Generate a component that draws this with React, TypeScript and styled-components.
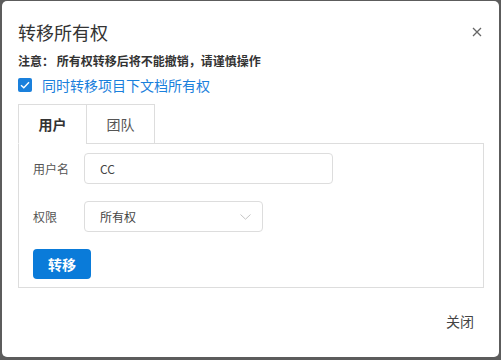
import React, { useState } from 'react';
import styled, { createGlobalStyle } from 'styled-components';

const GlobalStyle = createGlobalStyle`
  html, body {
    margin: 0;
    padding: 0;
    background: #5c5c5c;
    font-family: "Noto Sans CJK SC", "Noto Sans", sans-serif;
  }
  * { box-sizing: border-box; }
`;

const Dialog = styled.div`
  margin: 1px 2px 0 2px;
  width: 497px;
  height: 356px;
  background: #fff;
  border-radius: 5px;
  padding: 0 15px 0 16px;
  display: flex;
  flex-direction: column;
`;

const Header = styled.div`
  height: 48px;
  display: flex;
  align-items: center;
  justify-content: space-between;
  padding-top: 14px;
`;

const Title = styled.h1`
  margin: 0;
  font-size: 18px;
  font-weight: 400;
  color: #333;
  line-height: 18px;
`;

const Close = styled.button`
  border: 0;
  background: none;
  padding: 0;
  margin-right: 2px;
  display: flex;
  cursor: pointer;
`;

const Note = styled.div`
  margin-top: 4px;
  font-size: 12px;
  font-weight: 700;
  color: #333;
  line-height: 16px;
`;

const CheckRow = styled.label`
  margin-top: 9px;
  display: flex;
  align-items: center;
  gap: 10px;
  font-size: 14px;
  color: #1a80dc;
  line-height: 14px;
  cursor: pointer;
`;

const Box = styled.span`
  width: 14px;
  height: 14px;
  border-radius: 2px;
  background: #1a80dc;
  display: flex;
  align-items: center;
  justify-content: center;
`;

const Tabs = styled.div`
  margin-top: 12px;
  display: flex;
`;

const Tab = styled.button<{ $active?: boolean }>`
  width: 69px;
  height: 40px;
  margin-right: -1px;
  border: 1px solid #ddd;
  border-bottom-color: ${(p) => (p.$active ? 'transparent' : '#ddd')};
  background: #fff;
  font-family: inherit;
  font-size: 14px;
  font-weight: ${(p) => (p.$active ? 700 : 400)};
  color: ${(p) => (p.$active ? '#333' : '#555')};
  padding: 0;
  cursor: pointer;
`;

const Panel = styled.div`
  border: 1px solid #ddd;
  border-top: 0;
  padding: 9px 15px 8px 14px;
  display: flex;
  flex-direction: column;
  gap: 17px;
`;

const Row = styled.div`
  display: flex;
  align-items: center;
`;

const Label = styled.span`
  width: 51px;
  font-size: 12px;
  color: #555;
`;

const Input = styled.input<{ $w: number }>`
  width: ${(p) => p.$w}px;
  height: 31px;
  border: 1px solid #ddd;
  border-radius: 4px;
  padding: 0 15px;
  font-family: inherit;
  font-size: 12px;
  color: #444;
  outline: none;
`;

const Select = styled.div`
  width: 179px;
  height: 31px;
  border: 1px solid #ddd;
  border-radius: 4px;
  padding: 0 11px 0 15px;
  display: flex;
  align-items: center;
  justify-content: space-between;
  font-size: 12px;
  color: #444;
`;

const Primary = styled.button`
  width: 58px;
  height: 30px;
  border: 0;
  border-radius: 4px;
  background: #0a7bd9;
  color: #fff;
  font-family: inherit;
  font-size: 14px;
  font-weight: 700;
  cursor: pointer;
`;

const Footer = styled.div`
  margin-top: auto;
  height: 56px;
  display: flex;
  justify-content: flex-end;
  align-items: flex-start;
  padding-top: 10px;
  padding-right: 10px;
`;

const Ghost = styled.button`
  border: 0;
  background: none;
  padding: 0;
  font-family: inherit;
  font-size: 14px;
  color: #444;
  cursor: pointer;
`;

export default function App() {
  const [tab, setTab] = useState(0);
  return (
    <>
      <GlobalStyle />
      <Dialog>
        <Header>
          <Title>转移所有权</Title>
          <Close aria-label="close">
            <svg width="10" height="10" viewBox="0 0 10 10">
              <path d="M1 1L9 9M9 1L1 9" stroke="#666" strokeWidth="1.3" />
            </svg>
          </Close>
        </Header>
        <Note>注意： 所有权转移后将不能撤销，请谨慎操作</Note>
        <CheckRow>
          <Box>
            <svg width="10" height="8" viewBox="0 0 10 8">
              <path d="M1 4.2L3.8 6.8L9 1.2" stroke="#fff" strokeWidth="1.4" fill="none" />
            </svg>
          </Box>
          同时转移项目下文档所有权
        </CheckRow>
        <Tabs>
          <Tab $active={tab === 0} onClick={() => setTab(0)}>用户</Tab>
          <Tab $active={tab === 1} onClick={() => setTab(1)}>团队</Tab>
          <div style={{ flex: 1, borderBottom: '1px solid #ddd' }} />
        </Tabs>
        <Panel>
          <Row>
            <Label>用户名</Label>
            <Input $w={249} defaultValue="CC" />
          </Row>
          <Row>
            <Label>权限</Label>
            <Select>
              所有权
              <svg width="11" height="6" viewBox="0 0 11 6">
                <path d="M0.5 0.5L5.5 5.2L10.5 0.5" stroke="#c4c4c4" strokeWidth="1" fill="none" />
              </svg>
            </Select>
          </Row>
          <Row>
            <Primary>转移</Primary>
          </Row>
        </Panel>
        <Footer>
          <Ghost>关闭</Ghost>
        </Footer>
      </Dialog>
    </>
  );
}
